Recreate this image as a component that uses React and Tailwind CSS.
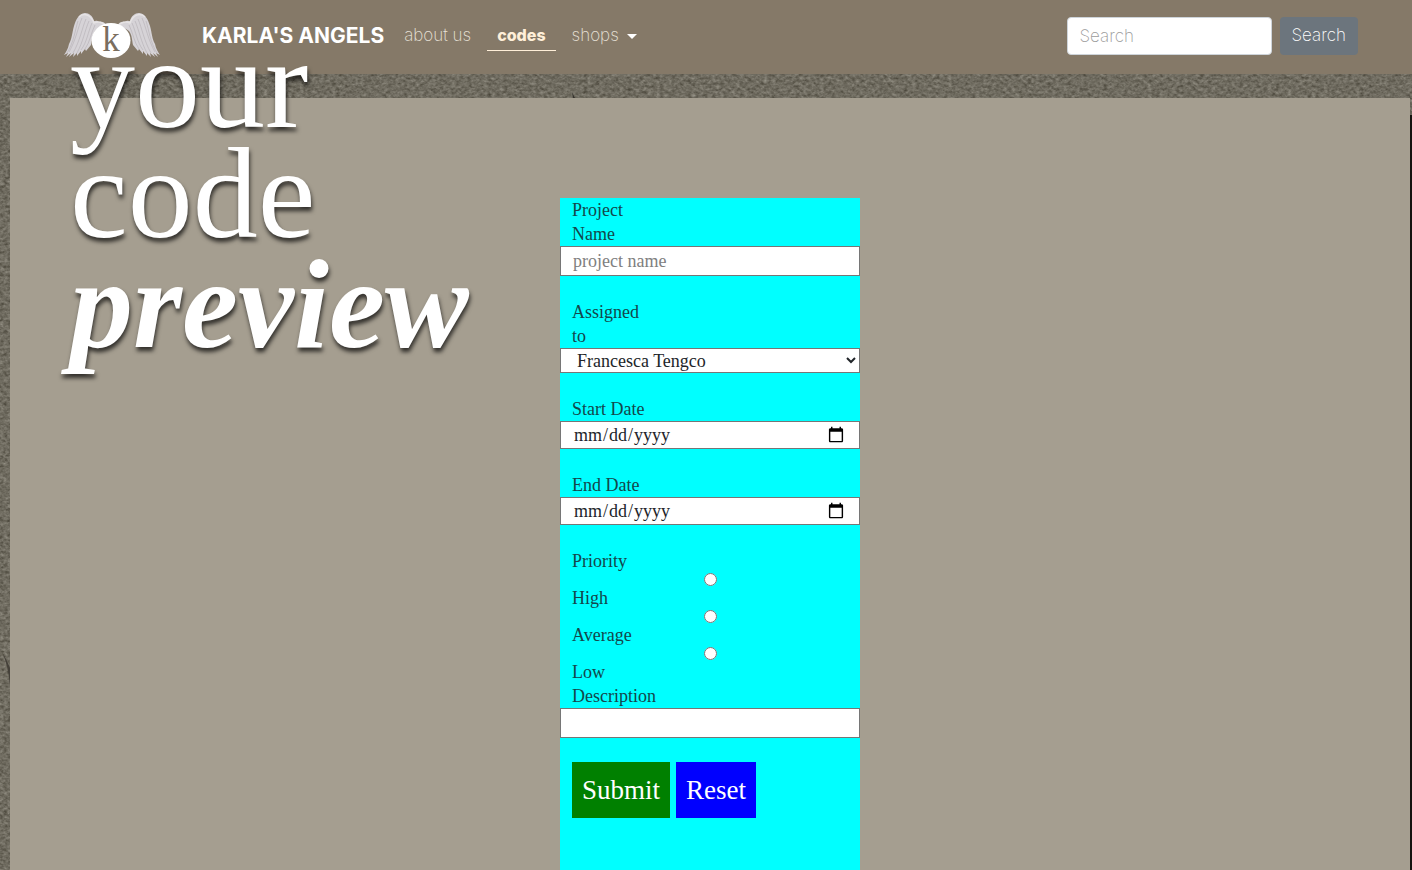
const labelClass = "block px-3 text-[18px] leading-6 text-[#14474b]";
const fieldClass =
  "block w-full rounded-none border border-[#767676] bg-white px-3 text-[18px] text-[#212529] outline-none placeholder:text-[#808080]";

function Stone() {
  return (
    <svg className="absolute inset-0 h-full w-full" aria-hidden="true">
      <filter id="stone" x="0" y="0" width="100%" height="100%" colorInterpolationFilters="sRGB">
        <feTurbulence type="fractalNoise" baseFrequency="0.25 0.35" numOctaves="4" seed="7" />
        <feColorMatrix values="0.3 0.15 0 0 0.21  0.3 0.15 0 0 0.195  0.3 0.15 0 0 0.15  0 0 0 0 1" />
      </filter>
      <rect width="100%" height="100%" fill="#6f6a5f" />
      <rect width="100%" height="100%" filter="url(#stone)" />
      <path d="M2 652 Q8 664 10 686 L10 668 Q7 660 2 652Z" fill="#45413a" />
      <path d="M572 92 L575 98 L573 98Z" fill="#35322d" />
    </svg>
  );
}

function Wing() {
  return (
    <g>
      <path
        d="M47 18 C45 14 42 13 39 14 C37 12 35 13 34 13 C33 8 29 5 25 5 C18 6 16 12 14 18 C12 25 12 31 9 36 C8 41 6 44 4 47 L8 45 L6 49 L11 45 L9 49 L14 45 L13 49 L17 45 L17 48 L21 43 L21 46 L25 41 L26 43 L31 37 C32 32 32 27 35 23 C39 20 43 19 47 18 Z"
        fill="#d6d3d7"
      />
      <path
        d="M22 10 C18 19 16 32 9 44 M26 11 C22 20 20 33 13 45 M29 13 C25 22 23 34 17 45 M32 15 C28 24 27 34 21 42 M35 17 C31 25 30 34 25 41 M18 13 C15 22 14 34 7 45"
        fill="none"
        stroke="#b3aeb3"
        strokeWidth="0.6"
      />
      <path d="M19 9 C24 4 31 7 34 15 C38 13 43 14 46 18" fill="none" stroke="#e6e3e4" strokeWidth="1.5" />
    </g>
  );
}

function Logo() {
  return (
    <svg viewBox="0 0 105 52" className="h-[52px] w-[105px]" role="img" aria-label="Karla's Angels logo">
      <Wing />
      <g transform="translate(104 0) scale(-1 1)">
        <Wing />
      </g>
      <ellipse cx="51" cy="32.500" rx="19.500" ry="17.500" fill="#fff" />
      <text x="51" y="43" textAnchor="middle" fontFamily="Liberation Serif, serif" fontSize="35" fill="#7a6e5f">
        k
      </text>
    </svg>
  );
}

function Navbar() {
  return (
    <header className="relative flex h-[74px] items-center bg-[#857968] pr-[54px] pb-0.5 pl-[60px] font-['Inter',sans-serif] text-[17px]">
      <a href="#home" className="mb-1 shrink-0">
        <Logo />
      </a>
      <a href="#home" className="ml-[37px] text-[21px] leading-8 font-bold whitespace-nowrap text-white">
        KARLA'S ANGELS
      </a>
      <nav className="ml-5 flex items-center gap-4 whitespace-nowrap text-[#e8e2d8]">
        <a href="#about" className="font-extralight">about us</a>
        <a href="#codes" className="border-b border-[#ffefd9] px-2.5 pt-px pb-0.5 text-base leading-[26px] font-extrabold text-[#ffefd9]">
          codes
        </a>
        <button type="button" className="flex items-center gap-2 font-extralight">
          shops
          <span className="border-x-[5px] border-t-[5px] border-x-transparent border-t-white" />
        </button>
      </nav>
      <form className="ml-auto flex gap-2" onSubmit={(e) => e.preventDefault()}>
        <input
          type="search"
          aria-label="Search"
          placeholder="Search"
          className="h-[38px] w-[205px] rounded border border-[#ced4da] bg-white px-3 font-extralight outline-none placeholder:text-[#9b9b9b]"
        />
        <button className="h-[38px] rounded bg-[#6c757d] px-3 font-extralight text-white">Search</button>
      </form>
    </header>
  );
}

function ProjectForm() {
  return (
    <form
      className="mx-auto w-[300px] grow bg-[#00ffff] pb-12 font-['Liberation_Serif',serif]"
      onSubmit={(e) => e.preventDefault()}
    >
      <label htmlFor="project" className={`${labelClass} w-[104px]`}>Project Name</label>
      <input id="project" placeholder="project name" className={`${fieldClass} mb-6 h-[30px]`} />
      <label htmlFor="assigned" className={`${labelClass} w-[92px]`}>Assigned to</label>
      <select id="assigned" className={`${fieldClass} mb-6 h-[25px]`}>
        <option>Francesca Tengco</option>
      </select>
      <label htmlFor="start" className={labelClass}>Start Date</label>
      <input id="start" type="date" className={`${fieldClass} mb-6 h-7`} />
      <label htmlFor="end" className={labelClass}>End Date</label>
      <input id="end" type="date" className={`${fieldClass} mb-6 h-7`} />
      <fieldset>
        <legend className={labelClass}>Priority</legend>
        {["High", "Average", "Low"].map((level) => (
          <div key={level}>
            <input id={level} type="radio" name="priority" className="mx-auto block h-[13px] w-[13px]" />
            <label htmlFor={level} className={labelClass}>{level}</label>
          </div>
        ))}
      </fieldset>
      <label htmlFor="description" className={labelClass}>Description</label>
      <input id="description" className={`${fieldClass} mb-6 h-[30px]`} />
      <div className="flex gap-1.5 px-3 text-[27px] text-white">
        <button type="submit" className="h-14 bg-[#008000] px-2.5">Submit</button>
        <button type="reset" className="h-14 bg-[#0000ff] px-2.5">Reset</button>
      </div>
    </form>
  );
}

export default function App() {
  return (
    <div className="relative flex min-h-screen flex-col overflow-hidden">
      <Stone />
      <Navbar />
      <div className="relative mt-6 flex grow">
        <main className="ml-2.5 flex grow flex-col bg-[#a59e90] pt-[100px]">
          <ProjectForm />
        </main>
        <div className="mt-[17px] w-0.5 bg-[#15130f]" />
      </div>
      <h1 className="pointer-events-none absolute top-7 left-[70px] font-['Liberation_Serif',serif] text-[130px] leading-[110px] text-white [text-shadow:1px_4px_4px_rgba(0,0,0,0.7)]">
        your
        <br />
        code
        <br />
        <em className="text-[126px] font-bold">preview</em>
      </h1>
    </div>
  );
}
